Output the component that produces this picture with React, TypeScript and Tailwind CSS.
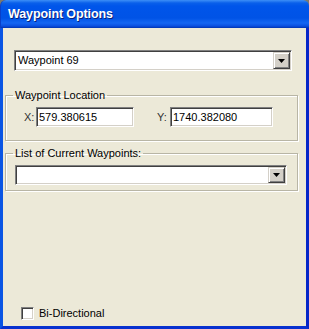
import React from "react";

const sunken =
  "border border-t-[#808080] border-l-[#808080] border-r-white border-b-white shadow-[inset_1px_1px_0_#404040,inset_-1px_-1px_0_#d4d0c8] bg-white";

const groupBox =
  "border border-[#b8b5a5] shadow-[inset_1px_1px_0_#fff,1px_1px_0_#fff] pl-[7px] pr-0 m-0";

function DropButton() {
  return (
    <div className="w-[17px] h-full flex items-center justify-center bg-[#d4d0c8] border border-t-[#d4d0c8] border-l-[#d4d0c8] border-r-[#404040] border-b-[#404040] shadow-[inset_1px_1px_0_#fff,inset_-1px_-1px_0_#808080]">
      <svg width="7" height="4" viewBox="0 0 7 4">
        <path d="M0 0h7L3.5 4z" fill="#000" />
      </svg>
    </div>
  );
}

function Combo({ value, height = "h-[21px]" }: { value?: string; height?: string }) {
  return (
    <div className={`flex ${height} ${sunken} p-[1px]`}>
      <span className="flex-1 flex items-center pl-[2px] leading-[13px]">{value}</span>
      <DropButton />
    </div>
  );
}

function TextField({ value, width }: { value: string; width: string }) {
  return (
    <div className={`${width} h-[20px] ${sunken} flex items-center pl-[2px] leading-[13px]`}>
      {value}
    </div>
  );
}

export default function App() {
  return (
    <div className="w-[309px] h-[329px] flex flex-col bg-[#7a7a6e] font-['Liberation_Sans',Arial,sans-serif] text-[11px] text-black">
      <div className="h-[28px] shrink-0 rounded-t-[6px] flex items-center pl-[7px] pb-[1px] bg-[linear-gradient(180deg,#3d8ff7_0px,#0a60ea_3px,#0055ea_6px,#0053e6_18px,#1466f2_23px,#0a4fe0_26px,#0033b0_28px)] border-l border-[#0a3fc8]">
        <span className="text-white font-bold text-[12.5px] leading-[16px] tracking-[-0.1px] [text-shadow:1px_1px_0_#0a1f7a]">
          Waypoint Options
        </span>
      </div>

      <div className="flex-1 flex flex-col bg-[#ece9d8] border-l-[3px] border-l-[#0a55e4] border-r-[3px] border-r-[#0626c8] border-b-[3px] border-b-[#0831cf]">
        <div className="mt-[22px] ml-[11px] w-[278px]">
          <Combo value="Waypoint 69" />
        </div>

        <fieldset className={`mt-[18px] ml-[2px] w-[293px] pb-[13px] ${groupBox}`}>
          <legend className="px-[2px] leading-[13px]">Waypoint Location</legend>
          <div className="mt-[5px] flex items-center">
            <span className="ml-[11px] w-[12px] text-[#333]">X:</span>
            <TextField value="579.380615" width="w-[98px]" />
            <span className="ml-[23px] w-[13px] text-[#333]">Y:</span>
            <TextField value="1740.382080" width="w-[103px]" />
          </div>
        </fieldset>

        <fieldset className={`mt-[6px] ml-[2px] w-[293px] pb-[5px] ${groupBox}`}>
          <legend className="px-[2px] leading-[13px]">List of Current Waypoints:</legend>
          <div className="mt-[5px] ml-[2px] w-[272px]">
            <Combo height="h-[20px]" />
          </div>
        </fieldset>

        <label className="mt-auto mb-[6px] ml-[18px] flex items-center">
          <span className={`w-[13px] h-[13px] ${sunken}`} />
          <span className="ml-[5px] leading-[13px]">Bi-Directional</span>
        </label>
      </div>
    </div>
  );
}
